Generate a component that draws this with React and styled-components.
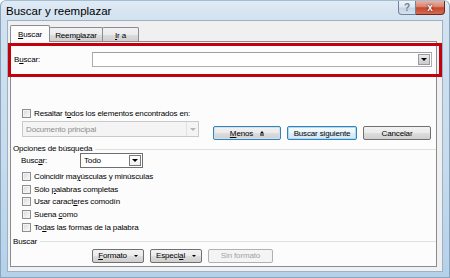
import React from "react";
import styled, { createGlobalStyle, css } from "styled-components";

const GlobalStyle = createGlobalStyle`
  html, body {
    margin: 0;
    padding: 0;
    background: #ffffff;
  }
`;

const Window = styled.div`
  position: relative;
  width: 450px;
  height: 278px;
  box-sizing: border-box;
  display: flex;
  flex-direction: column;
  background: linear-gradient(180deg, #dfeaf4 0%, #d1e1ef 20px, #c6dbec 60%, #b4d1ea 100%);
  border: 1px solid #8aa4bd;
  border-top-color: #a7bdd1;
  border-radius: 6px 6px 0 0;
  overflow: hidden;
  font-family: "Liberation Sans", Arial, sans-serif;
  font-size: 8px;
  letter-spacing: -0.15px;
  color: #000;
`;

const TitleBar = styled.div`
  height: 19px;
  display: flex;
  align-items: center;
  padding-left: 5px;
`;

const TitleText = styled.span`
  font-size: 11.5px;
  letter-spacing: 0;
  color: #000;
`;

const CaptionButtons = styled.div`
  margin-left: auto;
  margin-right: 4px;
  align-self: flex-start;
  display: flex;
`;

const HelpButton = styled.div`
  width: 18px;
  height: 14px;
  box-sizing: border-box;
  border: 1px solid #6f849c;
  border-top: none;
  border-radius: 0 0 0 4px;
  background: linear-gradient(180deg, #eef3f8 0%, #dde6ef 48%, #c6d4e2 52%, #d5e1ee 100%);
  display: flex;
  align-items: center;
  justify-content: center;
  font-size: 10px;
  font-weight: bold;
  color: #6d8299;
  letter-spacing: 0;
`;

const CloseButton = styled.div`
  width: 29px;
  height: 14px;
  box-sizing: border-box;
  border: 1px solid #6e2a22;
  border-left: none;
  border-top: none;
  border-radius: 0 0 4px 0;
  background: linear-gradient(180deg, #eab0a2 0%, #d9836e 45%, #c4472f 52%, #d46b52 100%);
  display: flex;
  align-items: center;
  justify-content: center;
  font-size: 10px;
  font-weight: bold;
  color: #fff;
  letter-spacing: 0;
  text-shadow: 0 0 2px #5a1a12, 0 0 1px #5a1a12;
`;

const Client = styled.div`
  flex: 1;
  margin: 0 6px 5px 6px;
  box-sizing: border-box;
  border: 1px solid #9db1c5;
  background: #f0f0f0;
  padding: 4px 5px 4px 2px;
  display: flex;
  flex-direction: column;
`;

const TabRow = styled.div`
  height: 16px;
  display: flex;
  align-items: flex-end;
`;

const Tab = styled.div`
  position: relative;
  width: ${(p) => p.$w}px;
  height: 14px;
  box-sizing: border-box;
  margin-left: -1px;
  border: 1px solid #898c95;
  border-bottom: none;
  border-radius: 2px 2px 0 0;
  background: linear-gradient(180deg, #f2f2f2 0%, #ebebeb 50%, #dddddd 51%, #cfcfcf 100%);
  display: flex;
  align-items: center;
  justify-content: center;
  padding-top: 1px;
  ${(p) =>
    p.$active &&
    css`
      height: 17px;
      margin-left: 0;
      margin-bottom: -1px;
      z-index: 1;
      background: #fcfcfc;
    `}
`;

const Panel = styled.div`
  height: 226px;
  box-sizing: border-box;
  border: 1px solid #898c95;
  background: #fcfcfc;
  padding: 10px 4px 0 3px;
  display: flex;
  flex-direction: column;
`;

const Row = styled.div`
  display: flex;
  align-items: center;
  height: ${(p) => p.$h || 15}px;
  margin-top: ${(p) => p.$mt || 0}px;
  margin-left: ${(p) => p.$ml || 0}px;
`;

const Label = styled.span`
  width: ${(p) => p.$w}px;
  flex: none;
  white-space: nowrap;
`;

const Key = styled.span`
  text-decoration: underline;
  text-underline-offset: 1px;
`;

const Combo = styled.div`
  width: ${(p) => p.$w}px;
  height: ${(p) => p.$h || 15}px;
  box-sizing: border-box;
  display: flex;
  align-items: stretch;
  border: 1px solid #abadb3;
  border-top-color: #9da0a8;
  background: #fff;
  ${(p) =>
    p.$dark &&
    css`
      border-color: #6f6f6f;
    `}
  ${(p) =>
    p.$disabled &&
    css`
      border-color: #c9c9c9;
      background: #f4f4f4;
      color: #8d8d8d;
    `}
`;

const ComboText = styled.div`
  flex: 1;
  display: flex;
  align-items: center;
  padding-left: 3px;
  white-space: nowrap;
`;

const ComboArrow = styled.div`
  width: 12px;
  margin: 1px;
  box-sizing: border-box;
  display: flex;
  align-items: center;
  justify-content: center;
  border: 1px solid #9a9a9a;
  background: linear-gradient(180deg, #ececec 0%, #dadada 50%, #cbcbcb 100%);
  ${(p) =>
    p.$light &&
    css`
      border-color: #7a7a7a;
      background: linear-gradient(180deg, #ffffff 0%, #f1f1f1 100%);
    `}
  ${(p) =>
    p.$disabled &&
    css`
      border: none;
      border-left: 1px solid #e2e2e2;
      background: transparent;
      margin: 0;
      width: 12px;
    `}
`;

const Triangle = styled.span`
  width: 0;
  height: 0;
  border-left: ${(p) => p.$s || 3}px solid transparent;
  border-right: ${(p) => p.$s || 3}px solid transparent;
  border-top: ${(p) => p.$s || 3}px solid ${(p) => p.$color || "#000"};
`;

const Check = styled.span`
  width: 9px;
  height: 9px;
  flex: none;
  box-sizing: border-box;
  border: 1px solid #8e8f8f;
  background: linear-gradient(135deg, #d6d6d6 0%, #eeeeee 60%, #fbfbfb 100%);
  box-shadow: inset 0 0 0 1px #f2f2f2;
  margin-right: 3px;
`;

const Button = styled.div`
  width: ${(p) => p.$w}px;
  height: 14px;
  flex: none;
  box-sizing: border-box;
  margin-left: ${(p) => p.$ml || 0}px;
  border: 1px solid #707070;
  border-radius: 2px;
  background: linear-gradient(180deg, #f2f2f2 0%, #ebebeb 48%, #dddddd 52%, #cfcfcf 100%);
  display: flex;
  align-items: center;
  justify-content: center;
  gap: 7px;
  white-space: nowrap;
  ${(p) =>
    p.$focus &&
    css`
      border-color: #3c7fb1;
      box-shadow: inset 0 0 0 1px #c8e4f5;
    `}
  ${(p) =>
    p.$default &&
    css`
      border-color: #3c7fb1;
      background: linear-gradient(180deg, #f6fbfe 0%, #eaf5fc 48%, #dcedf8 52%, #d2e8f6 100%);
      box-shadow: inset 0 0 0 1px #a9dcf6;
    `}
  ${(p) =>
    p.$disabled &&
    css`
      border-color: #adb2b5;
      background: #f4f4f4;
      color: #a3a3a3;
    `}
`;

const GroupHeader = styled.div`
  display: flex;
  align-items: center;
  height: 9px;
  margin-top: ${(p) => p.$mt || 0}px;
  margin-left: -1px;
  margin-right: -4px;
  gap: 3px;
  white-space: nowrap;
  &::after {
    content: "";
    flex: 1;
    height: 0;
    border-top: 1px solid #e0e0e0;
    margin-top: 1px;
  }
`;

const CheckList = styled.div`
  display: flex;
  flex-direction: column;
  margin-top: 2px;
`;

const CheckRow = styled.div`
  display: flex;
  align-items: center;
  height: 12.75px;
  margin-left: 8px;
  white-space: nowrap;
`;

const Annotation = styled.div`
  position: absolute;
  left: 7px;
  top: 42px;
  width: 434px;
  height: 34px;
  box-sizing: border-box;
  border: 3px solid #c4000c;
  pointer-events: none;
`;

const LessIcon = () => (
  <svg width="4" height="5" viewBox="0 0 4 5">
    <path d="M0 2.5 L2 0 L4 2.5 Z" fill="#000" />
    <rect x="0" y="3.5" width="4" height="1" fill="#000" />
  </svg>
);

const options = [
  [["Coincidir ma"], ["y", true], ["úsculas y minúsculas"]],
  [["Sólo "], ["p", true], ["alabras completas"]],
  [["Usar caract"], ["e", true], ["res comodín"]],
  [["Suena "], ["c", true], ["omo"]],
  [["To"], ["d", true], ["as las formas de la palabra"]],
];

const App = () => {
  return (
    <>
      <GlobalStyle />
      <Window>
        <TitleBar>
          <TitleText>Buscar y reemplazar</TitleText>
          <CaptionButtons>
            <HelpButton>?</HelpButton>
            <CloseButton>x</CloseButton>
          </CaptionButtons>
        </TitleBar>
        <Client>
          <TabRow>
            <Tab $active $w={40}>
              <span>
                <Key>B</Key>uscar
              </span>
            </Tab>
            <Tab $w={54}>
              <span>
                Reem<Key>p</Key>lazar
              </span>
            </Tab>
            <Tab $w={37}>
              <span>
                <Key>I</Key>r a
              </span>
            </Tab>
          </TabRow>
          <Panel>
            <Row $h={15}>
              <Label $w={78}>
                B<Key>u</Key>scar:
              </Label>
              <Combo $w={340}>
                <ComboText />
                <ComboArrow>
                  <Triangle />
                </ComboArrow>
              </Combo>
            </Row>

            <Row $h={10} $mt={41} $ml={8}>
              <Check />
              <span>
                Resaltar t<Key>o</Key>dos los elementos encontrados en:
              </span>
            </Row>

            <Row $h={16} $mt={3} $ml={8} style={{ alignItems: "flex-start" }}>
              <Combo $w={177} $h={16} $disabled>
                <ComboText>Documento principal</ComboText>
                <ComboArrow $disabled>
                  <Triangle $color="#b5b5b5" />
                </ComboArrow>
              </Combo>
              <Button $w={68} $ml={14} $focus style={{ marginTop: 5 }}>
                <span>
                  <Key>M</Key>enos
                </span>
                <LessIcon />
              </Button>
              <Button $w={70} $ml={6} $default style={{ marginTop: 5 }}>
                Buscar siguiente
              </Button>
              <Button $w={68} $ml={6} style={{ marginTop: 5 }}>
                Cancelar
              </Button>
            </Row>

            <GroupHeader $mt={7}>Opciones de búsqueda</GroupHeader>

            <Row $h={15} $ml={7}>
              <Label $w={59}>
                Busc<Key>a</Key>r:
              </Label>
              <Combo $w={63} $dark>
                <ComboText>Todo</ComboText>
                <ComboArrow $light>
                  <Triangle />
                </ComboArrow>
              </Combo>
            </Row>

            <CheckList>
              {options.map((parts, i) => (
                <CheckRow key={i}>
                  <Check />
                  <span>
                    {parts.map(([t, k], j) => (k ? <Key key={j}>{t}</Key> : <React.Fragment key={j}>{t}</React.Fragment>))}
                  </span>
                </CheckRow>
              ))}
            </CheckList>

            <GroupHeader $mt={3}>Buscar</GroupHeader>

            <Row $h={14} $mt={3} $ml={78}>
              <Button $w={52}>
                <span>
                  <Key>F</Key>ormato
                </span>
                <Triangle $s={2.5} />
              </Button>
              <Button $w={52} $ml={6}>
                <span>
                  Especi<Key>a</Key>l
                </span>
                <Triangle $s={2.5} />
              </Button>
              <Button $w={65} $ml={6} $disabled>
                Sin formato
              </Button>
            </Row>
          </Panel>
        </Client>
        <Annotation />
      </Window>
    </>
  );
};

export default App;
